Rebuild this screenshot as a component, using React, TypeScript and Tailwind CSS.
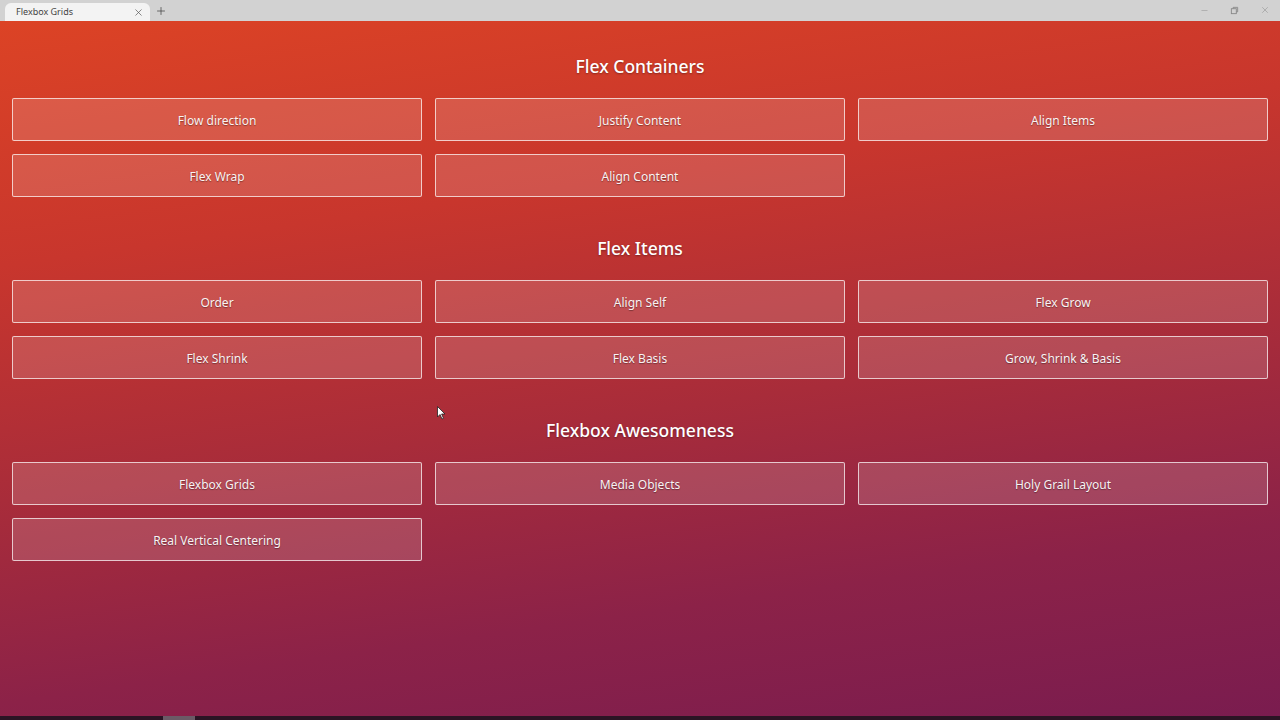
import { Minus, Plus, X } from "lucide-react";

type Section = {
  title: string;
  items: string[];
};

const sections: Section[] = [
  {
    title: "Flex Containers",
    items: ["Flow direction", "Justify Content", "Align Items", "Flex Wrap", "Align Content"],
  },
  {
    title: "Flex Items",
    items: ["Order", "Align Self", "Flex Grow", "Flex Shrink", "Flex Basis", "Grow, Shrink & Basis"],
  },
  {
    title: "Flexbox Awesomeness",
    items: ["Flexbox Grids", "Media Objects", "Holy Grail Layout", "Real Vertical Centering"],
  },
];

const TitleBar = () => (
  <div className="flex h-[21px] items-end bg-[#d2d2d2] text-[#333]">
    <div className="ml-[5px] flex h-[18px] w-[145px] items-center rounded-t-[6px] bg-[#f3f3f3] pl-[11px] pr-[6px]">
      <span className="flex-1 text-[9px] text-[#444]">Flexbox Grids</span>
      <X size={11} strokeWidth={1.5} className="text-[#555]" />
    </div>
    <div className="mb-[2px] ml-[3px] flex h-[16px] w-[16px] items-center justify-center">
      <Plus size={12} strokeWidth={1.5} className="text-[#444]" />
    </div>
    <div className="flex-1" />
    <div className="mb-[6px] flex items-center gap-[21px] pr-[10px] text-[#888]">
      <Minus size={9} strokeWidth={1.2} />
      <svg width="9" height="9" viewBox="0 0 10 10" fill="none" stroke="currentColor" strokeWidth="1">
        <rect x="1.5" y="3" width="5.5" height="5.5" />
        <path d="M3.5 3V1.5H8.5V6.5H7" />
      </svg>
      <X size={10} strokeWidth={1.2} />
    </div>
  </div>
);

const App = () => {
  return (
    <div
      className="relative flex h-[720px] w-[1280px] flex-col overflow-hidden"
      style={{ fontFamily: '"Noto Sans", "Open Sans", sans-serif' }}
    >
      <TitleBar />
      <main className="flex flex-1 flex-col bg-[linear-gradient(172deg,#dc4325_0%,#c8362d_28%,#a82c3a_55%,#8c2248_78%,#7a1c4f_100%)] px-[12px] pt-[31px]">
        {sections.map((section) => (
          <section key={section.title} className="mb-[37px]">
            <h2 className="mb-[18px] h-[28px] text-center text-[17.5px] font-medium leading-[28px] text-white [text-shadow:0_1px_2px_rgba(0,0,0,0.35)]">
              {section.title}
            </h2>
            <div className="grid grid-cols-3 gap-[13px]">
              {section.items.map((item) => (
                <button
                  key={item}
                  className="flex h-[43px] items-center justify-center rounded-[2px] border border-white/70 bg-white/15 pt-[2px] text-[12px] text-white/95 [text-shadow:0_1px_1px_rgba(0,0,0,0.35)]"
                >
                  {item}
                </button>
              ))}
            </div>
          </section>
        ))}
      </main>
      <div className="flex h-[4px] bg-[#2b1424]">
        <div className="ml-[163px] w-[32px] bg-[#6b5a66]" />
      </div>
      <svg
        className="absolute left-[437px] top-[406px]"
        width="9"
        height="14"
        viewBox="0 0 9 14"
      >
        <path d="M0.5 0.5V11L3 8.5L5 13L6.5 12.3L4.6 8H8Z" fill="white" stroke="#222" strokeWidth="0.8" />
      </svg>
    </div>
  );
};

export default App;
